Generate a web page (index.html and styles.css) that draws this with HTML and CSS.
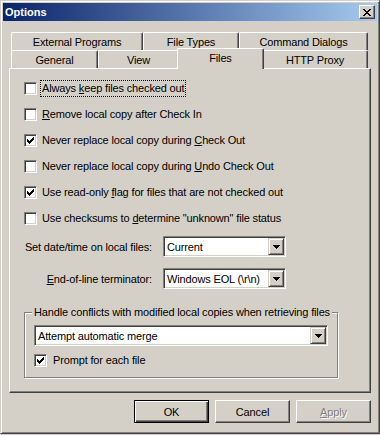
FILE: index.html
```html
<!DOCTYPE html>
<html lang="en">
<head>
    <meta charset="UTF-8">
    <title>Options</title>
    <link rel="stylesheet" href="styles.css">
</head>
<body>
    <div class="window">
        <div class="titlebar">
            <span class="title">Options</span>
            <span class="close">
                <svg width="8" height="7" viewBox="0 0 8 7" shape-rendering="crispEdges"><path d="M0 0h2v1h-2z M6 0h2v1h-2z M1 1h2v1h-2z M5 1h2v1h-2z M2 2h4v1h-4z M3 3h2v1h-2z M2 4h4v1h-4z M1 5h2v1h-2z M5 5h2v1h-2z M0 6h2v1h-2z M6 6h2v1h-2z" fill="#000"/></svg>
            </span>
        </div>

        <div class="body">
            <div class="tabs">
                <div class="tab-row">
                    <div class="tab tab-ext">External Programs</div>
                    <div class="tab tab-types">File Types</div>
                    <div class="tab tab-cmd">Command Dialogs</div>
                </div>
                <div class="tab-row">
                    <div class="tab tab-general">General</div>
                    <div class="tab tab-view">View</div>
                    <div class="tab tab-files active">Files</div>
                    <div class="tab tab-proxy">HTTP Proxy</div>
                </div>
            </div>

            <div class="panel">
                <div class="opt">
                    <span class="check"></span>
                    <span class="label focus">Always <u>k</u>eep files checked out</span>
                </div>
                <div class="opt">
                    <span class="check"></span>
                    <span class="label"><u>R</u>emove local copy after Check In</span>
                </div>
                <div class="opt">
                    <span class="check"><svg width="7" height="7" viewBox="0 0 7 7" shape-rendering="crispEdges"><path d="M0 2h1v3h-1z M1 3h1v3h-1z M2 4h1v3h-1z M3 3h1v3h-1z M4 2h1v3h-1z M5 1h1v3h-1z M6 0h1v3h-1z" fill="#000"/></svg></span>
                    <span class="label">Never replace local copy during <u>C</u>heck Out</span>
                </div>
                <div class="opt">
                    <span class="check"></span>
                    <span class="label">Never replace local copy during <u>U</u>ndo Check Out</span>
                </div>
                <div class="opt">
                    <span class="check"><svg width="7" height="7" viewBox="0 0 7 7" shape-rendering="crispEdges"><path d="M0 2h1v3h-1z M1 3h1v3h-1z M2 4h1v3h-1z M3 3h1v3h-1z M4 2h1v3h-1z M5 1h1v3h-1z M6 0h1v3h-1z" fill="#000"/></svg></span>
                    <span class="label">Use read-only <u>f</u>lag for files that are not checked out</span>
                </div>
                <div class="opt">
                    <span class="check"></span>
                    <span class="label">Use checksums to <u>d</u>etermine "unknown" file status</span>
                </div>

                <div class="selects">
                    <span class="sel-label">Set date/time on local files:</span>
                    <div class="combo">
                        <span class="combo-text">Current</span>
                        <span class="combo-btn"><svg width="7" height="4" viewBox="0 0 7 4" shape-rendering="crispEdges"><path d="M0 0h7v1h-7z M1 1h5v1h-5z M2 2h3v1h-3z M3 3h1v1h-1z" fill="#000"/></svg></span>
                    </div>
                    <span class="sel-label"><u>E</u>nd-of-line terminator:</span>
                    <div class="combo">
                        <span class="combo-text">Windows EOL (\r\n)</span>
                        <span class="combo-btn"><svg width="7" height="4" viewBox="0 0 7 4" shape-rendering="crispEdges"><path d="M0 0h7v1h-7z M1 1h5v1h-5z M2 2h3v1h-3z M3 3h1v1h-1z" fill="#000"/></svg></span>
                    </div>
                </div>

                <div class="group">
                    <span class="legend">Handle conflicts with modified local copies when retrieving files</span>
                    <div class="combo wide">
                        <span class="combo-text">Attempt automatic merge</span>
                        <span class="combo-btn"><svg width="7" height="4" viewBox="0 0 7 4" shape-rendering="crispEdges"><path d="M0 0h7v1h-7z M1 1h5v1h-5z M2 2h3v1h-3z M3 3h1v1h-1z" fill="#000"/></svg></span>
                    </div>
                    <div class="opt small">
                        <span class="check"><svg width="7" height="7" viewBox="0 0 7 7" shape-rendering="crispEdges"><path d="M0 2h1v3h-1z M1 3h1v3h-1z M2 4h1v3h-1z M3 3h1v3h-1z M4 2h1v3h-1z M5 1h1v3h-1z M6 0h1v3h-1z" fill="#000"/></svg></span>
                        <span class="label">Prompt for each file</span>
                    </div>
                </div>
            </div>

            <div class="buttons">
                <span class="btn default">OK</span>
                <span class="btn">Cancel</span>
                <span class="btn disabled"><u>A</u>pply</span>
            </div>
        </div>
    </div>
</body>
</html>
```

FILE: styles.css
```css
* {
    box-sizing: border-box;
}

body {
    margin: 0;
    font-family: "Liberation Sans", Arial, sans-serif;
    font-size: 11px;
    letter-spacing: -0.15px;
    color: #000;
    background-color: #d4d0c8;
}

.window {
    width: 380px;
    height: 434px;
    padding: 2px;
    background-color: #d4d0c8;
    border: 1px solid;
    border-color: #d4d0c8 #404040 #404040 #d4d0c8;
    box-shadow: inset 1px 1px #fff, inset -1px -1px #808080;
}

.titlebar {
    height: 18px;
    display: flex;
    align-items: center;
    justify-content: space-between;
    padding: 0 2px;
    background: linear-gradient(to right, #0a246a, #a6caf0);
    color: #fff;
    font-weight: bold;
    letter-spacing: 0;
}

.close {
    width: 16px;
    height: 14px;
    display: flex;
    align-items: center;
    justify-content: center;
    background-color: #d4d0c8;
    border: 1px solid;
    border-color: #fff #404040 #404040 #fff;
    box-shadow: inset -1px -1px #808080;
}

.body {
    padding: 11px 6px 0;
}

/* tabs */
.tab-row {
    display: flex;
    height: 18px;
    margin-left: 2px;
}

.tab {
    height: 18px;
    display: flex;
    align-items: center;
    justify-content: center;
    background-color: #d4d0c8;
    border: 1px solid;
    border-bottom: none;
    border-color: #fff #404040 #404040 #fff;
    border-radius: 2px 2px 0 0;
    box-shadow: inset -1px 0 #808080;
}

.tab-ext { width: 132px; }
.tab-types { width: 96px; }
.tab-cmd { width: 129px; }
.tab-general { width: 87px; }
.tab-view { width: 81px; }
.tab-files { width: 87px; }
.tab-proxy { width: 106px; }

.tab.active {
    height: 21px;
    margin: -2px -2px -1px;
    padding-bottom: 2px;
    position: relative;
    z-index: 1;
}

.panel {
    height: 325px;
    padding: 6px 14px 0;
    border: 1px solid;
    border-color: #fff #404040 #404040 #fff;
    box-shadow: inset -1px -1px #808080;
}

/* checkboxes */
.opt {
    display: flex;
    align-items: center;
    gap: 4px;
    height: 26px;
}

.opt.small {
    height: 16px;
    margin-top: 6px;
    gap: 5px;
}

.check {
    width: 13px;
    height: 13px;
    padding: 2px;
    background-color: #fff;
    border: 1px solid;
    border-color: #808080 #fff #fff #808080;
    box-shadow: inset 1px 1px #404040, inset -1px -1px #d4d0c8;
}

.check svg {
    display: block;
}

.label {
    padding: 1px;
    line-height: 13px;
    white-space: nowrap;
}

.label.focus {
    outline: 1px dotted #000;
}

/* combos */
.selects {
    display: grid;
    grid-template-columns: 139px 123px;
    align-items: center;
    row-gap: 11px;
    margin-top: 5px;
}

.sel-label {
    text-align: right;
    padding-right: 11px;
    white-space: nowrap;
}

.combo {
    height: 21px;
    display: flex;
    align-items: center;
    padding: 1px;
    background-color: #fff;
    border: 1px solid;
    border-color: #808080 #fff #fff #808080;
    box-shadow: inset 1px 1px #404040, inset -1px -1px #d4d0c8;
}

.combo-text {
    padding-left: 2px;
    white-space: nowrap;
}

.combo-btn {
    margin-left: auto;
    width: 16px;
    height: 17px;
    flex: none;
    display: flex;
    align-items: center;
    justify-content: center;
    background-color: #d4d0c8;
    border: 1px solid;
    border-color: #d4d0c8 #404040 #404040 #d4d0c8;
    box-shadow: inset 1px 1px #fff, inset -1px -1px #808080;
}

.combo.wide {
    margin-top: 6px;
}

/* group box */
.group {
    width: 314px;
    margin-top: 23px;
    padding: 0 9px 9px;
    border: 1px solid #808080;
    box-shadow: inset 1px 1px #fff, 1px 1px #fff;
}

.legend {
    display: block;
    width: fit-content;
    margin: -7px 0 0 -2px;
    padding: 0 2px;
    line-height: 13px;
    background-color: #d4d0c8;
    white-space: nowrap;
}

/* buttons */
.buttons {
    display: flex;
    justify-content: flex-end;
    gap: 6px;
    margin-top: 7px;
}

.btn {
    width: 75px;
    height: 23px;
    display: flex;
    align-items: center;
    justify-content: center;
    border: 1px solid;
    border-color: #fff #404040 #404040 #fff;
    box-shadow: inset -1px -1px #808080;
}

.btn.default {
    border-color: #000;
    box-shadow: inset 1px 1px #fff, inset -1px -1px #404040, inset -2px -2px #808080;
}

.btn.disabled {
    color: #808080;
    text-shadow: 1px 1px #fff;
}
```
